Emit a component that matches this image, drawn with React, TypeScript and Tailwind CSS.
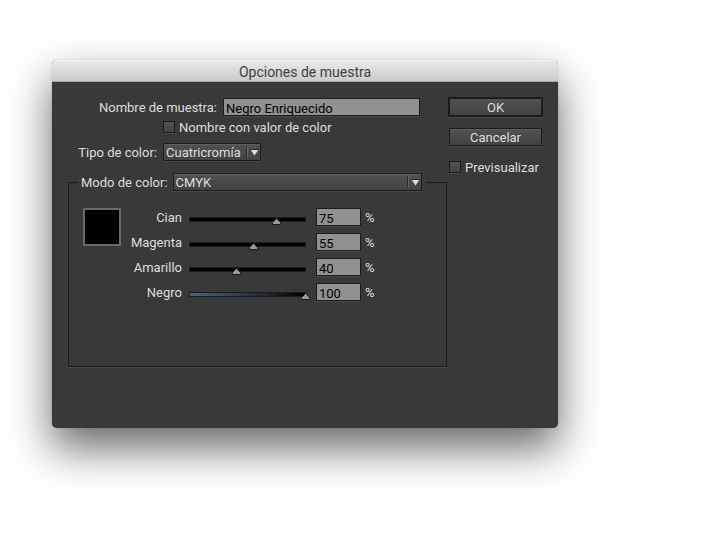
import { useState } from 'react'
import type { ReactNode } from 'react'

const initialChannels = [
  { id: 'cian', label: 'Cian', value: 75, track: 'bg-black' },
  { id: 'magenta', label: 'Magenta', value: 55, track: 'bg-black' },
  { id: 'amarillo', label: 'Amarillo', value: 40, track: 'bg-black' },
  { id: 'negro', label: 'Negro', value: 100, track: 'bg-[linear-gradient(to_right,#4c617f,#2c3848_50%,#000)]' },
]

const raised = 'border border-[#1c1c1c] bg-linear-to-b from-[#525252] to-[#424242] pt-px shadow-[0_1px_0_#484848,inset_0_1px_0_#5e5e5e]'
const field = 'h-[18px] border border-[#1c1c1c] bg-[#919191] text-black shadow-[0_1px_0_#484848] outline-none'

interface DropdownProps {
  id: string
  className: string
  children: ReactNode
}

function Dropdown({ id, className, children }: DropdownProps) {
  return (
    <div className={`relative ${className}`}>
      <select id={id} className={`block h-[18px] w-full appearance-none pl-0.5 pr-4 outline-none ${raised}`}>
        {children}
      </select>
      <svg className="pointer-events-none absolute right-0 top-0" width="16" height="18" viewBox="0 0 16 18">
        <path d="M1.5 3v11" stroke="#2b2b2b" />
        <path d="M2.5 3v11" stroke="#666" />
        <path d="M5.5 6.5h8L9.5 12.5z" fill="#dcdcdc" />
        <path d="M5 6.5h9" stroke="#2a2a2a" />
      </svg>
    </div>
  )
}

function CheckBox({ label }: { label: string }) {
  return (
    <label className="flex items-center gap-1">
      <input
        type="checkbox"
        className="size-3 appearance-none border border-[#1c1c1c] bg-linear-to-b from-[#525252] to-[#444] shadow-[0_1px_0_#484848] checked:from-[#999] checked:to-[#aaa]"
      />
      <span className="whitespace-nowrap pt-0.5">{label}</span>
    </label>
  )
}

export default function App() {
  const [name, setName] = useState('Negro Enriquecido')
  const [channels, setChannels] = useState(initialChannels)

  const setValue = (id: string, value: number) => {
    if (Number.isNaN(value)) return
    setChannels(channels.map((c) => (c.id === id ? { ...c, value: Math.max(0, Math.min(100, value)) } : c)))
  }

  return (
    <main className="min-h-screen bg-white pl-[52px] pt-[60px] font-['Roboto',sans-serif] text-[13px] leading-4 text-[#dedede]">
      <section className="w-full max-w-[506px] rounded-[5px] bg-[#393939] shadow-[0_0_1px_rgba(0,0,0,0.5),0_20px_44px_rgba(0,0,0,0.6)]">
        <header className="rounded-t-[5px] border-b border-[#aaa] bg-linear-to-b from-[#ebebeb] to-[#cbcbcb] pb-px pt-1 text-center text-[#404040] shadow-[inset_0_1px_0_#f6f6f6]">
          <h1 className="text-[14px] leading-4">Opciones de muestra</h1>
        </header>

        <form className="flex gap-px pb-[61px] pl-4 pr-[15px] pt-4" onSubmit={(e) => e.preventDefault()}>
          <div className="min-w-0 flex-1">
            <div className="flex items-center justify-end gap-1.5 pr-[27px]">
              <label htmlFor="name" className="whitespace-nowrap pt-0.5">Nombre de muestra:</label>
              <input
                id="name"
                value={name}
                onChange={(e) => setName(e.target.value)}
                className={`w-[197px] pl-0.5 pt-[3px] leading-[14px] ${field}`}
              />
            </div>

            <div className="ml-[95px] mt-0.5">
              <CheckBox label="Nombre con valor de color" />
            </div>

            <div className="mt-[7px] flex items-center gap-1.5">
              <label htmlFor="type" className="w-[89px] whitespace-nowrap pt-0.5 text-right">Tipo de color:</label>
              <Dropdown id="type" className="w-[98px]">
                <option>Cuatricromía</option>
                <option>Tinta plana</option>
              </Dropdown>
            </div>

            <fieldset className="mt-3 min-h-[194px] border border-[#1c1c1c] pl-[9px] pr-5 shadow-[0_1px_0_#484848]">
              <legend className="flex w-full items-center gap-[5px] pl-[3px] pr-1">
                <label htmlFor="mode" className="whitespace-nowrap pt-0.5">Modo de color:</label>
                <Dropdown id="mode" className="flex-1">
                  <option>CMYK</option>
                  <option>RGB</option>
                  <option>Lab</option>
                </Dropdown>
              </legend>

              <div className="flex pl-[5px] pt-[17px]">
                <div className="size-[38px] shrink-0 border-2 border-[#6a6a6a] bg-black" />
                <div className="flex flex-col gap-[7px]">
                  {channels.map((c) => (
                    <div key={c.id} className="flex items-center">
                      <label htmlFor={c.id} className="w-[61px] pt-0.5 text-right">{c.label}</label>
                      <div className="relative ml-[7px] h-[18px] w-[117px] pt-[9px]">
                        <div className={`h-[5px] border border-[#1c1c1c] ${c.track}`} />
                        <div className="absolute inset-x-px top-2.5">
                          <svg
                            className="block"
                            style={{ marginLeft: `calc(${c.value}% - 4px)` }}
                            width="9"
                            height="7"
                            viewBox="0 0 9 7"
                          >
                            <path d="M4.5 .5L8.5 4.5V6.5H.5V4.5z" fill="#999" stroke="#1c1c1c" />
                          </svg>
                        </div>
                        <input
                          type="range"
                          aria-label={c.label}
                          value={c.value}
                          onChange={(e) => setValue(c.id, Number(e.target.value))}
                          className="absolute inset-0 w-full opacity-0"
                        />
                      </div>
                      <input
                        id={c.id}
                        value={c.value}
                        onChange={(e) => setValue(c.id, Number(e.target.value))}
                        className={`ml-2.5 mr-1 w-[45px] pl-0.5 pt-[3px] leading-[14px] ${field}`}
                      />
                      <span className="pt-0.5">%</span>
                    </div>
                  ))}
                </div>
              </div>
            </fieldset>
          </div>

          <div className="flex w-[95px] flex-col">
            <button type="submit" className={`-mt-px h-5 outline outline-[#1c1c1c] -outline-offset-2 ${raised}`}>
              OK
            </button>
            <button type="button" className={`mx-px mt-[11px] h-[18px] ${raised}`}>
              Cancelar
            </button>
            <div className="ml-px mt-3">
              <CheckBox label="Previsualizar" />
            </div>
          </div>
        </form>
      </section>
    </main>
  )
}
